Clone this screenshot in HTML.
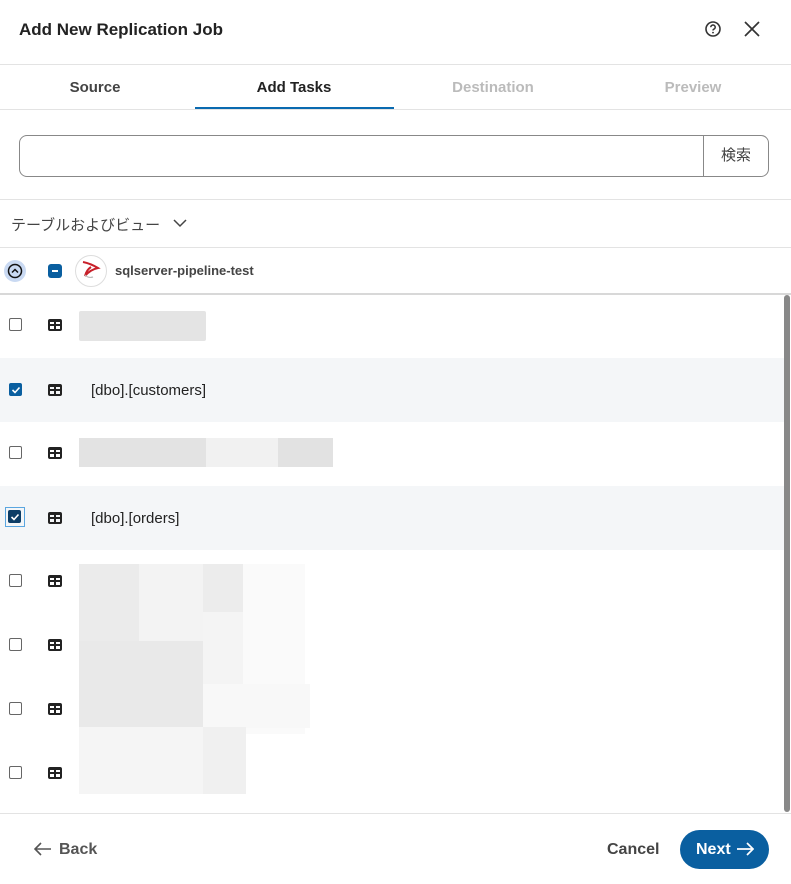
<!DOCTYPE html>
<html><head><meta charset="utf-8"><style>
*{box-sizing:border-box;margin:0;padding:0}
body{width:791px;height:884px;background:#fff;font-family:"Liberation Sans","Noto Sans CJK JP",sans-serif;position:relative;overflow:hidden;color:#222}
.a{position:absolute}
.tab{position:absolute;top:66px;height:46px;line-height:44px;text-align:center;font-size:15px;font-weight:bold;width:198px}
.cb{position:absolute;left:9px;width:13px;height:13px;border:1.5px solid #666;border-radius:2px;background:#fff}
.cbc{background:#0a5fa0;border-color:#0a5fa0}
.ti{position:absolute;left:48px;width:14px;height:12px;border:2px solid #222;border-top-width:3px;border-radius:2px}
.ti:before{content:"";position:absolute;left:4px;top:0;width:0;height:8px;border-left:2px solid #222}
.ti:after{content:"";position:absolute;left:0;top:2px;width:10px;height:0;border-top:2px solid #222}
.b{position:absolute}
</style></head><body>
<div class="a" style="left:19px;top:20px;font-size:17px;font-weight:bold;color:#222">Add New Replication Job</div>
<svg class="a" style="left:703px;top:19px" width="20" height="20" viewBox="0 0 20 20"><circle cx="10" cy="10" r="7" fill="none" stroke="#333" stroke-width="1.6"/><path d="M7.8 8.2a2.2 2.2 0 1 1 3 2c-.6.3-.8.7-.8 1.3" fill="none" stroke="#333" stroke-width="1.5"/><circle cx="10" cy="13.6" r=".9" fill="#333"/></svg>
<svg class="a" style="left:743px;top:20px" width="18" height="18" viewBox="0 0 18 18"><path d="M2 2L16 16M16 2L2 16" stroke="#333" stroke-width="1.7"/></svg>
<div class="a" style="left:0;top:64px;width:791px;border-top:1px solid #e3e3e3"></div>
<div class="tab" style="left:-4px;color:#444">Source</div>
<div class="tab" style="left:195px;color:#222">Add Tasks</div>
<div class="tab" style="left:394px;color:#bbb">Destination</div>
<div class="tab" style="left:594px;color:#bbb">Preview</div>
<div class="a" style="left:0;top:109px;width:791px;border-top:1px solid #e3e3e3"></div>
<div class="a" style="left:195px;top:107px;width:199px;height:2px;background:#0a6ab0"></div>
<div class="a" style="left:19px;top:135px;width:750px;height:42px;border:1px solid #888;border-radius:8px"></div>
<div class="a" style="left:703px;top:135px;height:42px;border-left:1px solid #888"></div>
<div class="a" style="left:703px;top:135px;width:66px;height:42px;line-height:42px;text-align:center;font-size:15px;color:#444">検索</div>
<div class="a" style="left:0;top:199px;width:791px;border-top:1px solid #e3e3e3"></div>
<div class="a" style="left:11px;top:214px;font-size:15px;color:#444">テーブルおよびビュー</div>
<svg class="a" style="left:173px;top:218px" width="14" height="10" viewBox="0 0 14 10"><path d="M1 2l6 6 6-6" fill="none" stroke="#444" stroke-width="1.5"/></svg>
<div class="a" style="left:0;top:247px;width:791px;border-top:1px solid #e3e3e3"></div>
<div class="a" style="left:4px;top:260px;width:22px;height:22px;border-radius:50%;background:#c9d9f2"></div>
<svg class="a" style="left:7px;top:263px" width="16" height="16" viewBox="0 0 16 16"><circle cx="8" cy="8" r="6.5" fill="none" stroke="#111" stroke-width="1.5"/><path d="M5 9.5l3-3 3 3" fill="none" stroke="#111" stroke-width="1.5"/></svg>
<div class="a" style="left:48px;top:264px;width:14px;height:14px;border-radius:3px;background:#0a5fa0"></div>
<div class="a" style="left:52px;top:270px;width:6px;height:2px;background:#fff"></div>
<div class="a" style="left:75px;top:255px;width:32px;height:32px;border-radius:50%;border:1px solid #ddd;background:#fff"></div>
<svg class="a" style="left:80px;top:259px" width="22" height="22" viewBox="0 0 22 22"><path d="M3 3c5 1 10 3 15 6-5 1-9 3-13 8 1-4 3-7 6-9" fill="none" stroke="#c8202a" stroke-width="2"/><path d="M5 16c2 2 5 3 8 2" fill="none" stroke="#bbb" stroke-width="1.2"/></svg>
<div class="a" style="left:115px;top:263px;font-size:13px;font-weight:bold;color:#444">sqlserver-pipeline-test</div>
<div class="a" style="left:0;top:293px;width:791px;border-top:2px solid #d8d8d8"></div>
<div class="a" style="left:0;top:358px;width:784px;height:64px;background:#f4f6f8"></div>
<div class="a" style="left:0;top:486px;width:784px;height:64px;background:#f4f6f8"></div>
<div class="a" style="left:784px;top:295px;width:6px;height:517px;background:#888;border-radius:3px"></div>
<div class="cb" style="top:318px"></div><div class="ti" style="top:319px"></div>
<div class="b" style="left:79px;top:311px;width:127px;height:30px;background:#e4e4e4;border-radius:2px"></div>
<div class="cb cbc" style="top:383px"></div><svg class="a" style="left:11px;top:385px" width="10" height="10"><path d="M1.5 5l2.5 2.5 4.5-5" fill="none" stroke="#fff" stroke-width="1.6"/></svg><div class="ti" style="top:384px"></div>
<div class="a" style="left:91px;top:382px;font-size:15px;color:#222">[dbo].[customers]</div>
<div class="cb" style="top:446px"></div><div class="ti" style="top:447px"></div>
<div class="b" style="left:79px;top:438px;width:127px;height:29px;background:#e3e3e3"></div>
<div class="b" style="left:206px;top:438px;width:72px;height:29px;background:#f1f1f1"></div>
<div class="b" style="left:278px;top:438px;width:55px;height:29px;background:#e2e2e2"></div>
<div class="a" style="left:5px;top:507px;width:20px;height:20px;border:1.5px solid #5aa6e0"></div>
<div class="cb cbc" style="top:510px;left:8px;background:#0c3d66;border-color:#0c3d66"></div><svg class="a" style="left:10px;top:512px" width="10" height="10"><path d="M1.5 5l2.5 2.5 4.5-5" fill="none" stroke="#fff" stroke-width="1.6"/></svg><div class="ti" style="top:512px"></div>
<div class="a" style="left:91px;top:510px;font-size:15px;color:#222">[dbo].[orders]</div>
<div class="cb" style="top:574px"></div><div class="ti" style="top:575px"></div>
<div class="cb" style="top:638px"></div><div class="ti" style="top:639px"></div>
<div class="cb" style="top:702px"></div><div class="ti" style="top:703px"></div>
<div class="cb" style="top:766px"></div><div class="ti" style="top:767px"></div>
<div class="b" style="left:79px;top:564px;width:60px;height:77px;background:#ebebeb"></div>
<div class="b" style="left:139px;top:564px;width:64px;height:77px;background:#f3f3f3"></div>
<div class="b" style="left:203px;top:564px;width:40px;height:48px;background:#ececec"></div>
<div class="b" style="left:203px;top:612px;width:40px;height:72px;background:#f4f4f4"></div>
<div class="b" style="left:243px;top:564px;width:62px;height:170px;background:#fafafa"></div>
<div class="b" style="left:79px;top:641px;width:124px;height:86px;background:#e9e9e9"></div>
<div class="b" style="left:203px;top:684px;width:107px;height:44px;background:#f8f8f8"></div>
<div class="b" style="left:79px;top:727px;width:124px;height:67px;background:#f5f5f5"></div>
<div class="b" style="left:203px;top:727px;width:43px;height:67px;background:#f0f0f0"></div>
<div class="a" style="left:0;top:813px;width:791px;border-top:1px solid #e3e3e3"></div>
<svg class="a" style="left:34px;top:842px" width="18" height="14" viewBox="0 0 18 14"><path d="M17 7H2M7 1L1 7l6 6" fill="none" stroke="#555" stroke-width="1.6"/></svg>
<div class="a" style="left:59px;top:841px;font-size:16px;font-weight:bold;color:#555">Back</div>
<div class="a" style="left:607px;top:841px;font-size:16px;font-weight:bold;color:#444">Cancel</div>
<div class="a" style="left:680px;top:830px;width:89px;height:39px;border-radius:20px;background:#0a5fa0"></div>
<div class="a" style="left:696px;top:841px;font-size:16px;font-weight:bold;color:#fff">Next</div>
<svg class="a" style="left:736px;top:842px" width="18" height="14" viewBox="0 0 18 14"><path d="M1 7h15M11 1l6 6-6 6" fill="none" stroke="#fff" stroke-width="1.7"/></svg>
</body></html>
